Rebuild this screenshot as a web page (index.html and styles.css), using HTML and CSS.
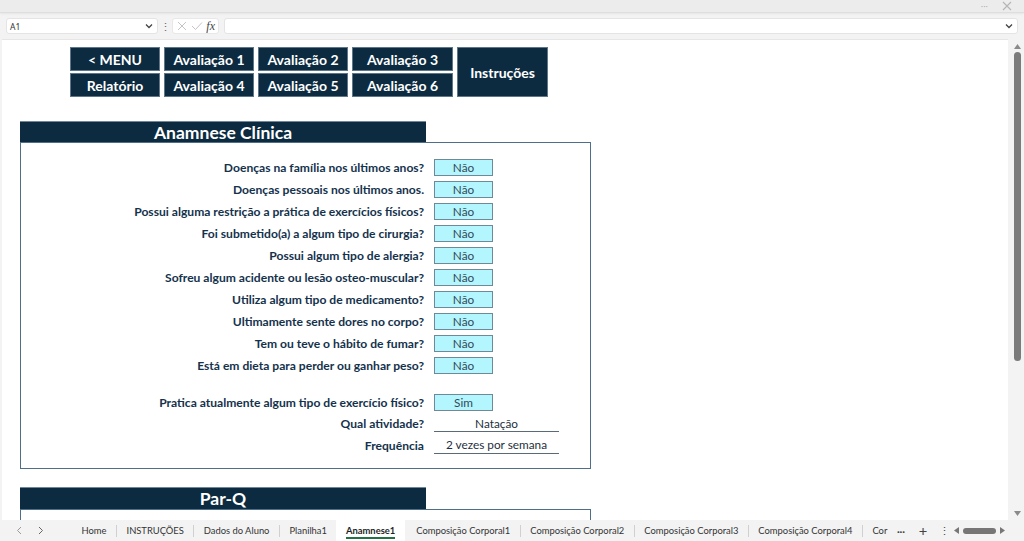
FILE: index.html
```html
<!DOCTYPE html>
<html lang="pt">
<head>
<meta charset="utf-8">
<title>Anamnese1</title>
<link rel="stylesheet" href="styles.css">
</head>
<body>
<div class="app">
  <div class="titlebar">
    <span class="tb-more">···</span>
    <svg class="tb-close" width="10" height="10" viewBox="0 0 10 10"><path d="M1 1L9 9M9 1L1 9" stroke="#b5b5b5" stroke-width="1.1" fill="none"/></svg>
  </div>
  <div class="formulabar">
    <div class="namebox">
      <span class="namebox-text">A1</span>
      <svg width="8" height="6" viewBox="0 0 8 6"><path d="M1 1.5L4 4.5L7 1.5" stroke="#444" stroke-width="1.3" fill="none"/></svg>
    </div>
    <span class="kebab">⋮</span>
    <div class="fxbtns">
      <svg width="10" height="10" viewBox="0 0 10 10"><path d="M1 1L9 9M9 1L1 9" stroke="#c4c4c4" stroke-width="1" fill="none"/></svg>
      <svg width="12" height="10" viewBox="0 0 12 10"><path d="M1 5L4.5 8.5L11 1.5" stroke="#c4c4c4" stroke-width="1" fill="none"/></svg>
      <span class="fx">fx</span>
    </div>
    <div class="fxinput">
      <svg width="8" height="6" viewBox="0 0 8 6"><path d="M1 1.5L4 4.5L7 1.5" stroke="#444" stroke-width="1.3" fill="none"/></svg>
    </div>
  </div>

  <div class="main">
    <div class="sheet">
      <div class="navgrid">
        <div class="navbtn">&lt; MENU</div>
        <div class="navbtn">Avaliação 1</div>
        <div class="navbtn">Avaliação 2</div>
        <div class="navbtn">Avaliação 3</div>
        <div class="navbtn navbtn-tall">Instruções</div>
        <div class="navbtn">Relatório</div>
        <div class="navbtn">Avaliação 4</div>
        <div class="navbtn">Avaliação 5</div>
        <div class="navbtn">Avaliação 6</div>
      </div>

      <section class="panel">
        <div class="panel-head">Anamnese Clínica</div>
        <div class="panel-body">
          <div class="qrow"><span class="qlabel">Doenças na família nos últimos anos?</span><span class="ans">Não</span></div>
          <div class="qrow"><span class="qlabel">Doenças pessoais nos últimos anos.</span><span class="ans">Não</span></div>
          <div class="qrow"><span class="qlabel">Possui alguma restrição a prática de exercícios físicos?</span><span class="ans">Não</span></div>
          <div class="qrow"><span class="qlabel">Foi submetido(a) a algum tipo de cirurgia?</span><span class="ans">Não</span></div>
          <div class="qrow"><span class="qlabel">Possui algum tipo de alergia?</span><span class="ans">Não</span></div>
          <div class="qrow"><span class="qlabel">Sofreu algum acidente ou lesão osteo-muscular?</span><span class="ans">Não</span></div>
          <div class="qrow"><span class="qlabel">Utiliza algum tipo de medicamento?</span><span class="ans">Não</span></div>
          <div class="qrow"><span class="qlabel">Ultimamente sente dores no corpo?</span><span class="ans">Não</span></div>
          <div class="qrow"><span class="qlabel">Tem ou teve o hábito de fumar?</span><span class="ans">Não</span></div>
          <div class="qrow"><span class="qlabel">Está em dieta para perder ou ganhar peso?</span><span class="ans">Não</span></div>
          <div class="qspacer"></div>
          <div class="qrow"><span class="qlabel">Pratica atualmente algum tipo de exercício físico?</span><span class="ans">Sim</span></div>
          <div class="qrow qrow-short"><span class="qlabel">Qual atividade?</span><span class="lineval">Natação</span></div>
          <div class="qrow qrow-short"><span class="qlabel">Frequência</span><span class="lineval">2 vezes por semana</span></div>
        </div>
      </section>

      <section class="panel panel-next">
        <div class="panel-head">Par-Q</div>
        <div class="panel-body panel-body-open"></div>
      </section>
    </div>
    <div class="vscroll">
      <svg class="varrow" width="7" height="5" viewBox="0 0 7 5"><path d="M0 5L3.5 0L7 5Z" fill="#8a8a8a"/></svg>
      <div class="vthumb"></div>
      <div class="vfill"></div>
      <svg class="varrow" width="7" height="5" viewBox="0 0 7 5"><path d="M0 0L3.5 5L7 0Z" fill="#8a8a8a"/></svg>
    </div>
  </div>

  <div class="tabbar">
    <div class="tabnav">
      <svg width="6" height="9" viewBox="0 0 6 9"><path d="M5 1L1.5 4.5L5 8" stroke="#9a9a9a" stroke-width="1" fill="none"/></svg>
      <svg width="6" height="9" viewBox="0 0 6 9"><path d="M1 1L4.5 4.5L1 8" stroke="#666" stroke-width="1" fill="none"/></svg>
    </div>
    <div class="tabs">
      <span class="tab">Home</span><span class="tabsep"></span>
      <span class="tab">INSTRUÇÕES</span><span class="tabsep"></span>
      <span class="tab">Dados do Aluno</span><span class="tabsep"></span>
      <span class="tab">Planilha1</span>
      <span class="tab tab-active"><span class="tab-active-text">Anamnese1</span></span>
      <span class="tab">Composição Corporal1</span><span class="tabsep"></span>
      <span class="tab">Composição Corporal2</span><span class="tabsep"></span>
      <span class="tab">Composição Corporal3</span><span class="tabsep"></span>
      <span class="tab">Composição Corporal4</span><span class="tabsep"></span>
      <span class="tab tab-cut">Cor</span>
    </div>
    <div class="tabtools">
      <span class="tt-more">···</span>
      <span class="tt-plus">+</span>
      <span class="tt-kebab">⋮</span>
      <div class="hscroll">
        <svg width="5" height="7" viewBox="0 0 5 7"><path d="M5 0L0 3.5L5 7Z" fill="#777"/></svg>
        <div class="hthumb"></div>
        <svg width="5" height="7" viewBox="0 0 5 7"><path d="M0 0L5 3.5L0 7Z" fill="#777"/></svg>
      </div>
    </div>
  </div>
</div>
</body>
</html>
```

FILE: styles.css
```css
* { box-sizing: border-box; margin: 0; padding: 0; }

body {
  margin: 0;
  width: 1024px;
  height: 541px;
  overflow: hidden;
  background: #f3f3f3;
  font-family: Lato, "Liberation Sans", sans-serif;
}

.app {
  display: flex;
  flex-direction: column;
  width: 1024px;
  height: 541px;
}

/* ---------- top chrome ---------- */
.titlebar {
  height: 13px;
  background: #ececec;
  border-bottom: 1px solid #dedede;
  box-shadow: 0 1px 2px rgba(0, 0, 0, 0.06);
  display: flex;
  justify-content: flex-end;
  align-items: center;
  gap: 14px;
  padding-right: 12px;
}

.tb-more {
  font-family: "Noto Sans", sans-serif;
  font-size: 9px;
  color: #b0b0b0;
  line-height: 1;
}

.formulabar {
  height: 26px;
  display: flex;
  align-items: center;
  padding-left: 6px;
}

.namebox {
  width: 152px;
  height: 16px;
  background: #fff;
  border: 1px solid #e4e4e4;
  border-radius: 3px;
  display: flex;
  align-items: center;
  justify-content: space-between;
  padding: 0 4px 0 3px;
}

.namebox-text {
  font-family: "Noto Sans", sans-serif;
  font-size: 8.5px;
  color: #333;
}

.kebab {
  width: 14px;
  text-align: center;
  font-size: 11px;
  color: #666;
  font-family: "Noto Sans", sans-serif;
}

.fxbtns {
  width: 47px;
  height: 16px;
  background: #fff;
  border: 1px solid #e8e8e8;
  border-radius: 3px;
  display: flex;
  align-items: center;
  justify-content: space-between;
  padding: 0 3px 0 4px;
}

.fx {
  font-family: "Liberation Serif", serif;
  font-style: italic;
  font-size: 12px;
  color: #444;
  line-height: 1;
}

.fxinput {
  margin-left: 5px;
  width: 794px;
  height: 16px;
  background: #fff;
  border: 1px solid #e4e4e4;
  border-radius: 3px;
  display: flex;
  align-items: center;
  justify-content: flex-end;
  padding-right: 4px;
}

/* ---------- main sheet ---------- */
.main {
  height: 481px;
  display: flex;
}

.sheet {
  width: 1006px;
  margin-left: 2px;
  height: 481px;
  background: #fff;
  border-top: 1px solid #e6e6e6;
  overflow: hidden;
  padding: 7px 0 0 18px;
}

.navgrid {
  margin-left: 50px;
  display: grid;
  grid-template-columns: 90px 90px 90px 101px 91px;
  grid-template-rows: 24px 24px;
  column-gap: 4px;
  row-gap: 2px;
  width: max-content;
}

.navbtn {
  background: #0c2b40;
  border: 1px solid #5d7688;
  color: #fff;
  font-weight: 700;
  font-size: 14px;
  display: flex;
  align-items: center;
  justify-content: center;
  white-space: nowrap;
}

.navbtn-tall {
  grid-column: 5;
  grid-row: 1 / span 2;
}

.panel {
  margin-top: 24px;
  width: 571px;
}

.panel-head {
  width: 406px;
  height: 21px;
  background: #0c2b40;
  border-top: 1px solid #6f8797;
  color: #fff;
  font-weight: 700;
  font-size: 17.5px;
  display: flex;
  align-items: center;
  justify-content: center;
}

.panel-body {
  border: 1px solid #4f6f88;
  padding: 13px 0 12px 0;
}

.qrow {
  height: 22px;
  display: grid;
  grid-template-columns: 403px 59px 1fr;
  column-gap: 10px;
  align-items: center;
}

.qrow-short {
  height: 21.5px;
}

.qspacer {
  height: 15px;
}

.qlabel {
  text-align: right;
  font-weight: 700;
  font-size: 12.1px;
  color: #14324c;
  white-space: nowrap;
}

.ans {
  height: 17px;
  background: #b3f6fd;
  border: 1px solid #6e8997;
  font-size: 11.8px;
  color: #33495a;
  display: flex;
  align-items: center;
  justify-content: center;
}

.lineval {
  grid-column: 2 / span 2;
  width: 125px;
  height: 17px;
  border-bottom: 1px solid #5a6a76;
  font-size: 11.8px;
  color: #1d2f3c;
  display: flex;
  align-items: center;
  justify-content: center;
  white-space: nowrap;
}

.panel-next {
  margin-top: 18px;
}

.panel-next .panel-head {
  height: 22px;
}

.panel-body-open {
  height: 60px;
}

/* ---------- vertical scrollbar ---------- */
.vscroll {
  width: 16px;
  height: 481px;
  background: #f3f3f3;
  display: flex;
  flex-direction: column;
  align-items: center;
  padding: 5px 0 4px 2px;
}

.vthumb {
  margin-top: 3px;
  width: 7px;
  height: 309px;
  background: #7b7b7b;
  border-radius: 4px;
}

.vfill {
  flex: 1;
}

/* ---------- sheet tabs ---------- */
.tabbar {
  height: 21px;
  background: #f3f3f3;
  display: flex;
  align-items: center;
  font-size: 9.4px;
  color: #333;
}

.tabnav {
  width: 72px;
  flex: none;
  display: flex;
  align-items: center;
  gap: 16px;
  padding-left: 16px;
}

.tabs {
  display: flex;
  align-items: center;
  height: 21px;
  flex: 1;
  overflow: hidden;
}

.tab {
  padding: 0 9.5px;
  white-space: nowrap;
  line-height: 21px;
  height: 21px;
}

.tabsep {
  width: 1px;
  height: 12px;
  background: #d0d0d0;
}

.tab-active {
  background: #fff;
  font-weight: 700;
  color: #1f1f1f;
  margin: 0 2px 0 0;
  padding: 0 9.5px;
  display: flex;
  align-items: flex-start;
}

.tab-active-text {
  display: block;
  line-height: 21px;
  border-bottom: 2px solid #237146;
  height: 19px;
}

.tab-cut {
  padding-right: 0;
}

.tabtools {
  display: flex;
  align-items: center;
  width: 134px;
  flex: none;
  color: #444;
}

.tt-more {
  width: 22px;
  text-align: center;
  font-size: 10px;
  font-weight: 700;
}

.tt-plus {
  width: 22px;
  text-align: center;
  font-size: 15px;
  font-family: "Noto Sans", sans-serif;
}

.tt-kebab {
  width: 20px;
  text-align: center;
  font-size: 11px;
  font-family: "Noto Sans", sans-serif;
}

.hscroll {
  display: flex;
  align-items: center;
  gap: 4px;
  margin-left: 0;
}

.hthumb {
  width: 33px;
  height: 6px;
  background: #767676;
  border-radius: 3px;
}
```
